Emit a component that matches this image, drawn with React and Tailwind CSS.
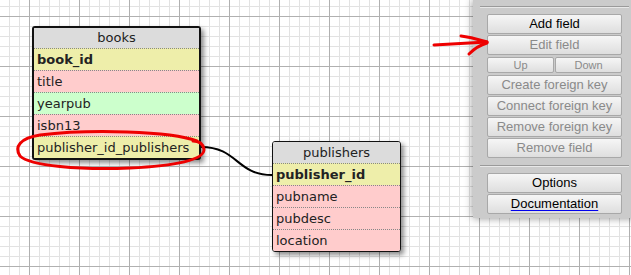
import React from 'react'

const ROW_BG = {
  pk: 'bg-[#eeeeaa] font-bold',
  fk: 'bg-[#eeeeaa]',
  red: 'bg-[#ffcccc]',
  green: 'bg-[#ccffcc]',
}

function Table({ name, rows, className, thick }) {
  return (
    <div
      className={`absolute flex flex-col overflow-hidden rounded-[3px] bg-white shadow-[3px_3px_5px_rgba(0,0,0,0.45)] ${
        thick ? 'border-2' : 'border'
      } border-[#111] ${className}`}
    >
      <div className={`${thick ? 'h-[20px] leading-[20px]' : 'h-[21px] leading-[21px]'} bg-[#dcdcdc] text-center text-[#222]`}>
        {name}
      </div>
      {rows.map(([label, kind]) => (
        <div
          key={label}
          className={`h-[22px] border-t border-dotted border-[#888] px-[3px] leading-[21px] text-[#222] ${ROW_BG[kind]}`}
        >
          {label}
        </div>
      ))}
    </div>
  )
}

function Btn({ children, disabled, className = 'h-[20px]' }) {
  return (
    <div
      className={`flex items-center justify-center rounded-[2px] border border-[#a8a8a8] bg-[linear-gradient(#f6f6f6,#dedede)] ${
        disabled ? 'text-[#8a8a8a]' : 'text-black'
      } ${className}`}
    >
      {children}
    </div>
  )
}

function Sep() {
  return <div className="mx-[7px] h-[2px] border-t border-[#9a9a9a] border-b border-b-[#e8e8e8]" />
}

export default function App() {
  return (
    <div
      className="relative h-[275px] w-[631px] overflow-hidden bg-white text-[13px] [font-family:'DejaVu_Sans',sans-serif]
                 bg-[linear-gradient(to_right,#b0b0b0_1px,transparent_1px),linear-gradient(to_bottom,#b0b0b0_1px,transparent_1px),linear-gradient(to_right,#e2e2e2_1px,transparent_1px),linear-gradient(to_bottom,#e2e2e2_1px,transparent_1px)]
                 bg-[length:50px_50px,50px_50px,10px_10px,10px_10px]
                 bg-[position:29px_16px,29px_16px,9px_6px,9px_6px]"
    >
      {/* connector */}
      <svg className="absolute left-0 top-0" width={631} height={275}>
        <path d="M201 147 C 238 147, 236 175, 272 175" fill="none" stroke="#000" strokeWidth={2} />
      </svg>

      <Table
        name="books"
        thick
        className="left-[32px] top-[26px] w-[169px]"
        rows={[
          ['book_id', 'pk'],
          ['title', 'red'],
          ['yearpub', 'green'],
          ['isbn13', 'red'],
          ['publisher_id_publishers', 'fk'],
        ]}
      />

      <Table
        name="publishers"
        className="left-[272px] top-[141px] w-[129px]"
        rows={[
          ['publisher_id', 'pk'],
          ['pubname', 'red'],
          ['pubdesc', 'red'],
          ['location', 'red'],
        ]}
      />

      {/* side panel */}
      <div className="absolute left-[473px] top-0 flex h-[218px] w-[163px] flex-col bg-[#cbcbcb] pt-[6px] text-[13px] shadow-[0_0_8px_rgba(0,0,0,0.45)] [font-family:'Liberation_Sans',Arial,sans-serif]">
        <Sep />
        <div className="mx-[14px] mt-[6px] flex flex-col gap-[1px]">
          <Btn>Add field</Btn>
          <Btn disabled>Edit field</Btn>
          <div className="mt-[1px] flex gap-[1px]">
            <Btn disabled className="h-[16px] flex-1 text-[11px]">Up</Btn>
            <Btn disabled className="h-[16px] flex-1 text-[11px]">Down</Btn>
          </div>
          <Btn disabled className="mt-[1px] h-[20px]">Create foreign key</Btn>
          <Btn disabled>Connect foreign key</Btn>
          <Btn disabled>Remove foreign key</Btn>
          <Btn disabled>Remove field</Btn>
        </div>
        <div className="mt-[7px]">
          <Sep />
        </div>
        <div className="mx-[14px] mt-[6px] flex flex-col gap-[1px]">
          <Btn>Options</Btn>
          <Btn>
            <span className="underline decoration-[#0000ee] underline-offset-2">Documentation</span>
          </Btn>
        </div>
      </div>

      {/* red annotations */}
      <svg className="pointer-events-none absolute left-0 top-0" width={631} height={275}>
        <path
          d="M197 141 C 170 131, 90 129, 40 135 C 20 138, 14 147, 20 156 C 30 166, 80 170, 130 168 C 175 166, 205 160, 204 149 C 203 144, 199 141, 193 141"
          fill="none"
          stroke="#ee0000"
          strokeWidth={3}
          strokeLinecap="round"
        />
        <path d="M434 45 L 487 42" fill="none" stroke="#ee0000" strokeWidth={3} strokeLinecap="round" />
        <path d="M461 36 C 470 37, 480 40, 487 42" fill="none" stroke="#ee0000" strokeWidth={3} strokeLinecap="round" />
        <path d="M469 54 C 474 49, 480 45, 487 43" fill="none" stroke="#ee0000" strokeWidth={3} strokeLinecap="round" />
      </svg>
    </div>
  )
}
